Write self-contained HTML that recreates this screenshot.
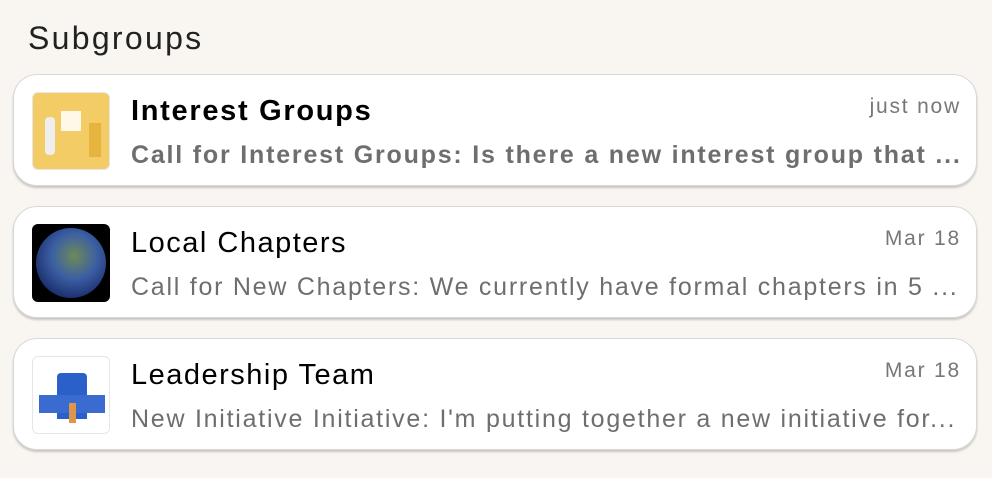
<html><head><style>
body{margin:0;width:992px;height:478px;background:#f9f6f1;font-family:"Liberation Sans",sans-serif;position:relative;overflow:hidden}
h1{position:absolute;left:28px;top:20px;margin:0;font-weight:normal;font-size:32px;letter-spacing:2.3px;color:#222}
.c{position:absolute;left:13px;width:964px;height:112px;background:#fff;border:1px solid #d8d8d8;border-radius:24px;box-shadow:0 2px 2px rgba(0,0,0,.2);box-sizing:border-box}
.i{position:absolute;left:18px;top:17px;width:78px;height:78px;border-radius:6px;border:1px solid #e6e6e6;box-sizing:border-box;overflow:hidden}
.t{position:absolute;left:117px;top:20px;font-size:29px;letter-spacing:1.5px;color:#000;white-space:nowrap}
.s{position:absolute;left:117px;top:66px;font-size:25px;letter-spacing:1.75px;color:#6e6e6e;white-space:nowrap;width:830px;overflow:hidden}
.d{position:absolute;right:15px;top:20px;font-size:21px;letter-spacing:1.8px;color:#777}
</style></head><body>
<h1>Subgroups</h1>
<div class="c" style="top:74px"><div class="i" style="background:#f4cc66"><div style="position:absolute;left:28px;top:18px;width:20px;height:20px;background:#fff8e8"></div><div style="position:absolute;left:12px;top:24px;width:10px;height:38px;background:#eee;border-radius:4px"></div><div style="position:absolute;left:56px;top:30px;width:12px;height:34px;background:#e8b440"></div></div><div class="t" style="font-weight:bold;letter-spacing:1.7px">Interest Groups</div><div class="s" style="font-weight:bold;letter-spacing:1.8px">Call for Interest Groups: Is there a new interest group that ...</div><div class="d">just now</div></div>
<div class="c" style="top:206px"><div class="i" style="background:#000;border:none"><div style="position:absolute;left:4px;top:4px;width:70px;height:70px;border-radius:50%;background:radial-gradient(circle at 55% 40%,#6f8a58,#3b5fa3 40%,#1c2f6e 75%)"></div></div><div class="t">Local Chapters</div><div class="s">Call for New Chapters: We currently have formal chapters in 5 ...</div><div class="d">Mar 18</div></div>
<div class="c" style="top:338px"><div class="i" style="background:#fff"><div style="position:absolute;left:24px;top:16px;width:30px;height:46px;background:#2b5fc9;border-radius:4px 4px 0 0"></div><div style="position:absolute;left:6px;top:38px;width:66px;height:18px;background:#3a6bd0"></div><div style="position:absolute;left:36px;top:46px;width:7px;height:20px;background:#e0964a"></div></div><div class="t">Leadership Team</div><div class="s">New Initiative Initiative: I'm putting together a new initiative for...</div><div class="d">Mar 18</div></div>
</body></html>
